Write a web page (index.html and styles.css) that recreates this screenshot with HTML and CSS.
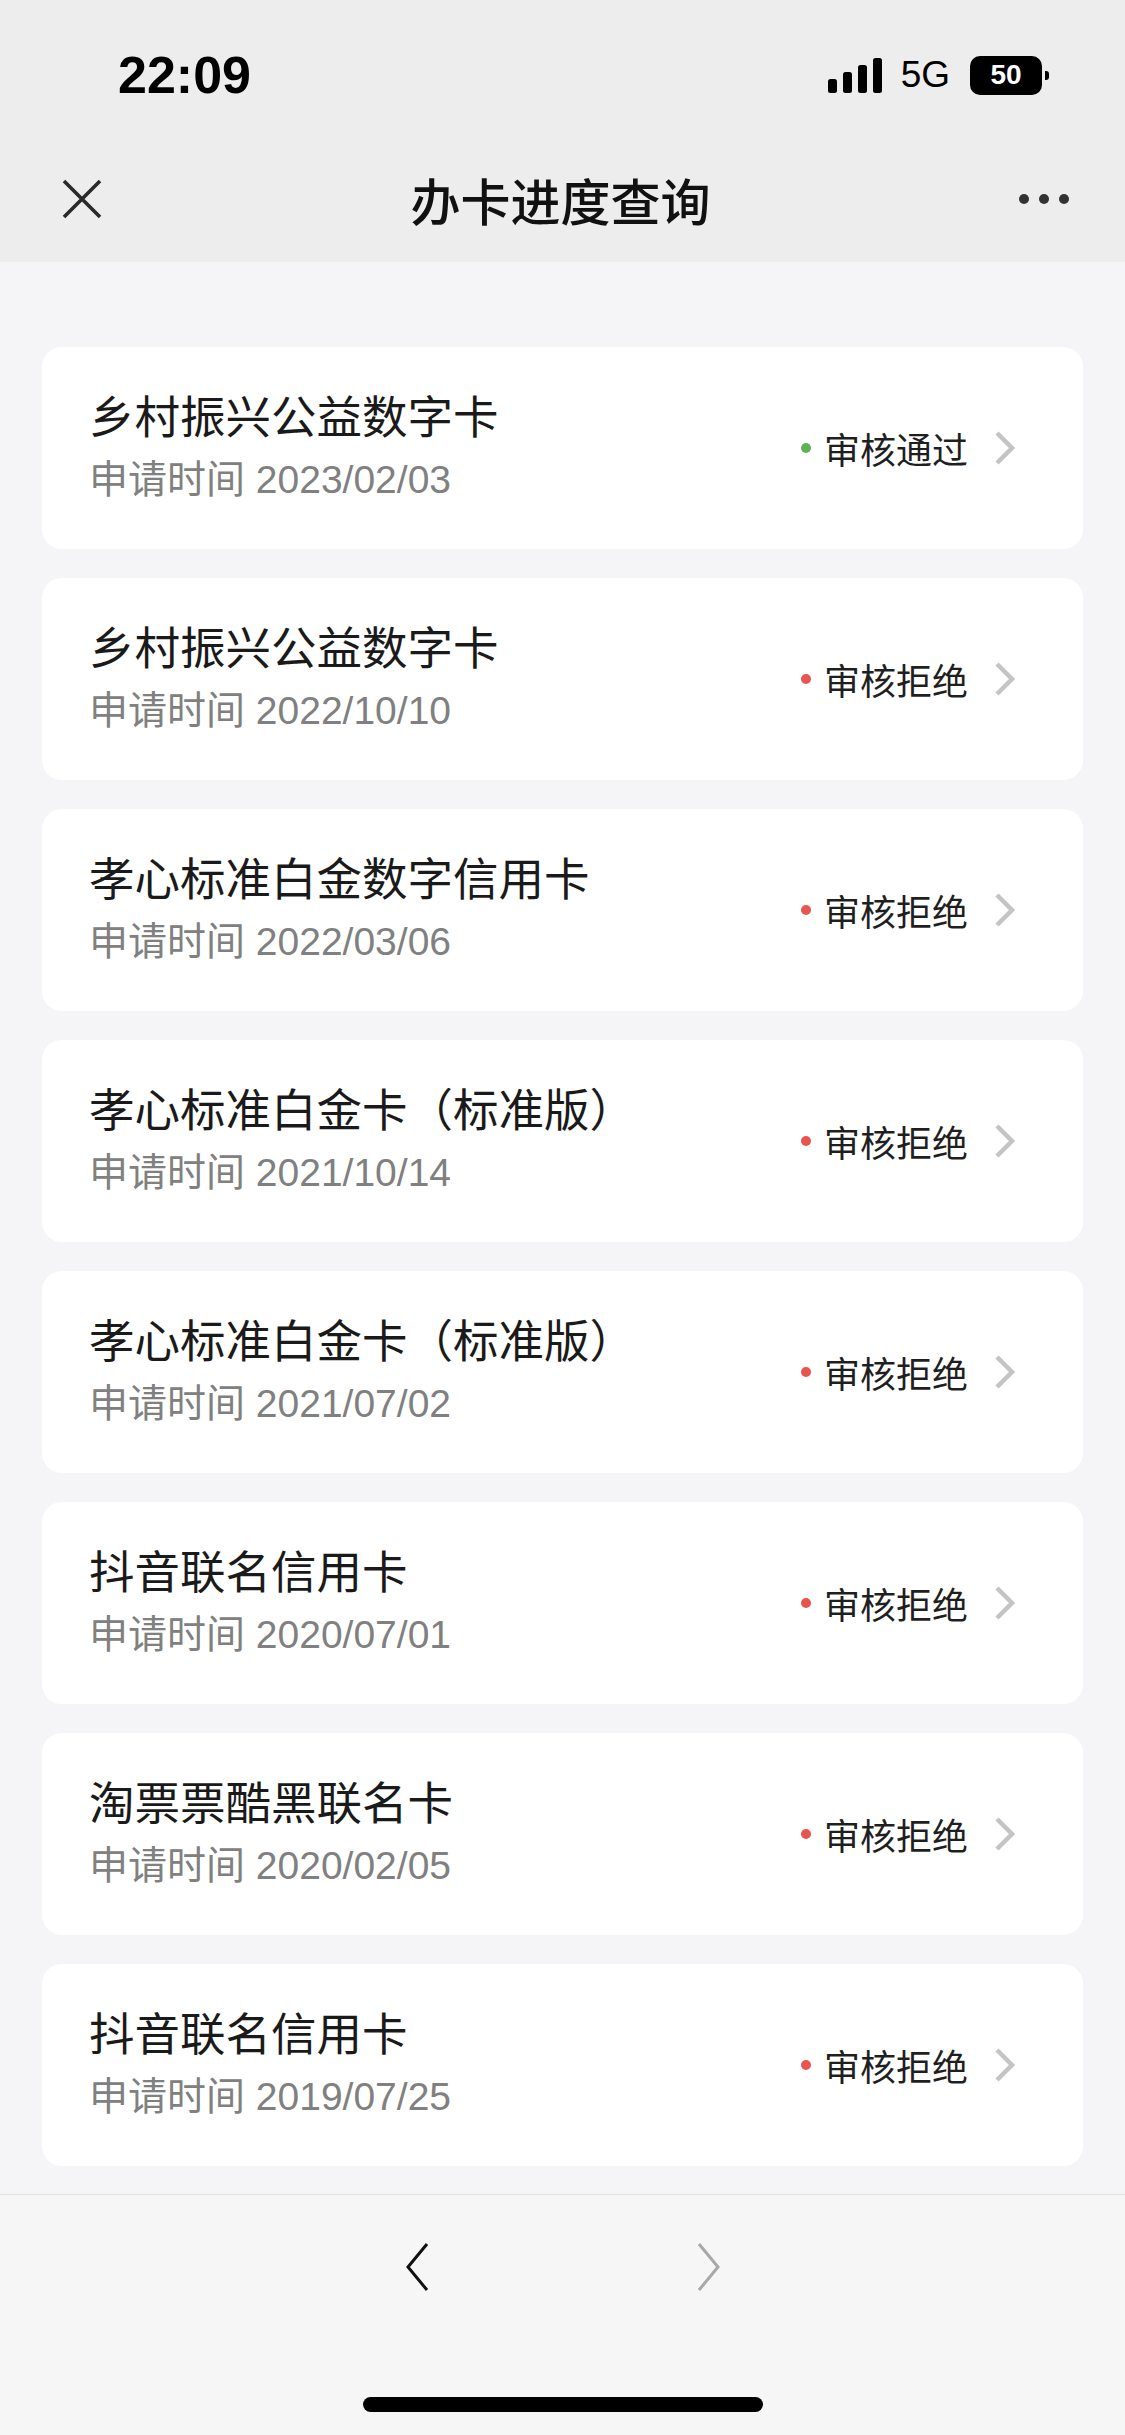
FILE: index.html
```html
<!DOCTYPE html>
<html>
<head>
  <meta charset="utf-8">
  <title>办卡进度查询</title>
  <link rel="stylesheet" href="styles.css">
</head>
<body>
  <div class="top">
    <div class="status-bar">
      <span class="time">22:09</span>
      <div class="status-icons">
        <svg class="signal" width="56" height="35" viewBox="0 0 56 35">
          <rect x="0" y="21" width="9" height="14" rx="2.5"/>
          <rect x="15" y="14" width="9" height="21" rx="2.5"/>
          <rect x="30" y="7" width="9" height="28" rx="2.5"/>
          <rect x="45" y="0" width="9" height="35" rx="2.5"/>
        </svg>
        <span class="net">5G</span>
        <div class="battery">
          <span class="battery-body">50</span>
          <span class="battery-nub"></span>
        </div>
      </div>
    </div>
    <div class="nav-bar">
      <svg class="close" width="40" height="40" viewBox="0 0 40 40">
        <path d="M2 2 L38 38 M38 2 L2 38" stroke="#2a2a2a" stroke-width="3.6" fill="none"/>
      </svg>
      <div class="nav-title">办卡进度查询</div>
      <div class="more"><i></i><i></i><i></i></div>
    </div>
  </div>

  <div class="list">
    <div class="card">
      <div class="card-info">
        <div class="card-name">乡村振兴公益数字卡</div>
        <div class="card-date">申请时间 2023/02/03</div>
      </div>
      <div class="card-status"><span class="dot pass"></span>审核通过</div>
      <svg class="arrow" width="22" height="34" viewBox="0 0 22 34"><path d="M3 2 L18 17 L3 32" stroke="#c4c4c4" stroke-width="4.5" fill="none"/></svg>
    </div>
    <div class="card">
      <div class="card-info">
        <div class="card-name">乡村振兴公益数字卡</div>
        <div class="card-date">申请时间 2022/10/10</div>
      </div>
      <div class="card-status"><span class="dot reject"></span>审核拒绝</div>
      <svg class="arrow" width="22" height="34" viewBox="0 0 22 34"><path d="M3 2 L18 17 L3 32" stroke="#c4c4c4" stroke-width="4.5" fill="none"/></svg>
    </div>
    <div class="card">
      <div class="card-info">
        <div class="card-name">孝心标准白金数字信用卡</div>
        <div class="card-date">申请时间 2022/03/06</div>
      </div>
      <div class="card-status"><span class="dot reject"></span>审核拒绝</div>
      <svg class="arrow" width="22" height="34" viewBox="0 0 22 34"><path d="M3 2 L18 17 L3 32" stroke="#c4c4c4" stroke-width="4.5" fill="none"/></svg>
    </div>
    <div class="card">
      <div class="card-info">
        <div class="card-name">孝心标准白金卡（标准版）</div>
        <div class="card-date">申请时间 2021/10/14</div>
      </div>
      <div class="card-status"><span class="dot reject"></span>审核拒绝</div>
      <svg class="arrow" width="22" height="34" viewBox="0 0 22 34"><path d="M3 2 L18 17 L3 32" stroke="#c4c4c4" stroke-width="4.5" fill="none"/></svg>
    </div>
    <div class="card">
      <div class="card-info">
        <div class="card-name">孝心标准白金卡（标准版）</div>
        <div class="card-date">申请时间 2021/07/02</div>
      </div>
      <div class="card-status"><span class="dot reject"></span>审核拒绝</div>
      <svg class="arrow" width="22" height="34" viewBox="0 0 22 34"><path d="M3 2 L18 17 L3 32" stroke="#c4c4c4" stroke-width="4.5" fill="none"/></svg>
    </div>
    <div class="card">
      <div class="card-info">
        <div class="card-name">抖音联名信用卡</div>
        <div class="card-date">申请时间 2020/07/01</div>
      </div>
      <div class="card-status"><span class="dot reject"></span>审核拒绝</div>
      <svg class="arrow" width="22" height="34" viewBox="0 0 22 34"><path d="M3 2 L18 17 L3 32" stroke="#c4c4c4" stroke-width="4.5" fill="none"/></svg>
    </div>
    <div class="card">
      <div class="card-info">
        <div class="card-name">淘票票酷黑联名卡</div>
        <div class="card-date">申请时间 2020/02/05</div>
      </div>
      <div class="card-status"><span class="dot reject"></span>审核拒绝</div>
      <svg class="arrow" width="22" height="34" viewBox="0 0 22 34"><path d="M3 2 L18 17 L3 32" stroke="#c4c4c4" stroke-width="4.5" fill="none"/></svg>
    </div>
    <div class="card">
      <div class="card-info">
        <div class="card-name">抖音联名信用卡</div>
        <div class="card-date">申请时间 2019/07/25</div>
      </div>
      <div class="card-status"><span class="dot reject"></span>审核拒绝</div>
      <svg class="arrow" width="22" height="34" viewBox="0 0 22 34"><path d="M3 2 L18 17 L3 32" stroke="#c4c4c4" stroke-width="4.5" fill="none"/></svg>
    </div>
  </div>

  <div class="bottom-bar">
    <div class="page-nav">
      <svg width="26" height="50" viewBox="0 0 26 50"><path d="M23 2 L4 25 L23 48" stroke="#111" stroke-width="3" fill="none"/></svg>
      <svg width="26" height="50" viewBox="0 0 26 50"><path d="M3 2 L22 25 L3 48" stroke="#a8a8a8" stroke-width="3" fill="none"/></svg>
    </div>
    <div class="home-indicator"></div>
  </div>
</body>
</html>
```

FILE: styles.css
```css
body {
  margin: 0;
  width: 1125px;
  height: 2435px;
  display: flex;
  flex-direction: column;
  overflow: hidden;
  background-color: #f5f5f7;
  font-family: "Liberation Sans", "Noto Sans CJK SC", sans-serif;
  color: #1a1a1a;
}
.top {
  background-color: #ededed;
}
.status-bar {
  height: 150px;
  display: flex;
  align-items: center;
  justify-content: space-between;
  padding: 0 76px 0 118px;
}
.time {
  font-size: 52px;
  font-weight: bold;
  color: #000;
}
.status-icons {
  display: flex;
  align-items: center;
  gap: 17px;
}
.signal {
  fill: #000;
}
.net {
  font-size: 37px;
  color: #000;
  margin-right: 3px;
}
.battery {
  display: flex;
  align-items: center;
  gap: 3px;
}
.battery-body {
  width: 72px;
  height: 39px;
  border-radius: 10px;
  background-color: #000;
  color: #fff;
  font-size: 28px;
  font-weight: bold;
  display: flex;
  align-items: center;
  justify-content: center;
}
.battery-nub {
  width: 4px;
  height: 9px;
  border-radius: 0 3px 3px 0;
  background-color: #000;
}
.nav-bar {
  height: 98px;
  padding: 0 56px 14px 62px;
  display: flex;
  align-items: center;
  justify-content: space-between;
}
.nav-title {
  font-size: 50px;
  font-weight: 500;
  color: #111;
}
.more {
  display: flex;
  gap: 10px;
}
.more i {
  width: 10px;
  height: 10px;
  border-radius: 50%;
  background-color: #333;
}
.list {
  flex: 1;
  padding: 85px 42px 0;
  display: flex;
  flex-direction: column;
  gap: 29px;
  overflow: hidden;
}
.card {
  height: 202px;
  flex-shrink: 0;
  background-color: #fff;
  border-radius: 20px;
  display: flex;
  align-items: center;
  padding: 0 67px 0 47px;
}
.card-info {
  flex: 1;
}
.card-name {
  font-size: 45.5px;
  line-height: 56px;
  color: #1a1a1a;
}
.card-date {
  margin-top: 7px;
  font-size: 39px;
  line-height: 52px;
  color: #808080;
}
.card-status {
  display: flex;
  align-items: center;
  font-size: 36px;
  color: #1f1f1f;
  margin-right: 26px;
}
.dot {
  width: 10px;
  height: 10px;
  border-radius: 50%;
  margin-right: 13px;
}
.dot.pass {
  background-color: #5eb253;
}
.dot.reject {
  background-color: #e8554e;
}
.bottom-bar {
  height: 240px;
  flex-shrink: 0;
  border-top: 1px solid #e2e2e2;
  background-color: #f6f6f6;
  display: flex;
  flex-direction: column;
  align-items: center;
}
.page-nav {
  margin-top: 47px;
  display: flex;
  gap: 266px;
}
.home-indicator {
  margin-top: auto;
  margin-bottom: 23px;
  width: 400px;
  height: 15px;
  border-radius: 8px;
  background-color: #000;
}
```
